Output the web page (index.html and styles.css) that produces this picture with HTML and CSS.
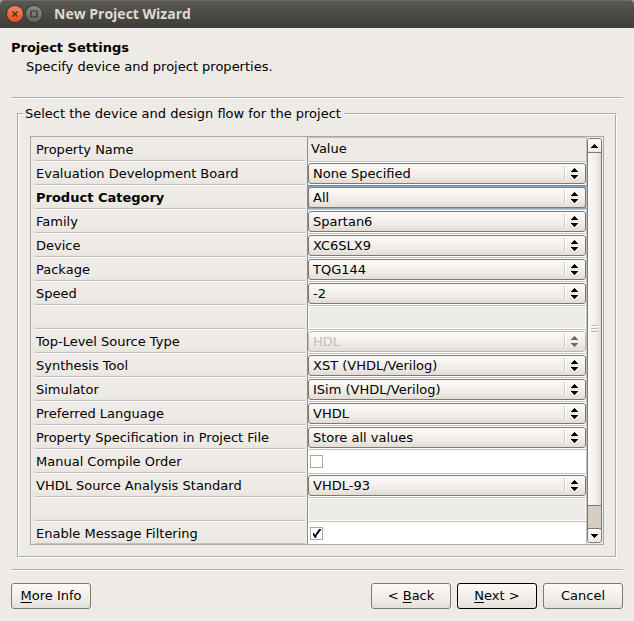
FILE: index.html
```html
<!DOCTYPE html>
<html lang="en">
<head>
<meta charset="utf-8">
<title>New Project Wizard</title>
<link rel="stylesheet" href="styles.css">
</head>
<body>
<svg class="defs" aria-hidden="true">
  <symbol id="arrows" viewBox="0 0 7 11" shape-rendering="crispEdges">
    <path d="M3 0h1v1h1v1h1v1h1v1H0V3h1V2h1V1h1zM0 7h7v1H6v1H5v1H4v1H3v-1H2V9H1V8H0z"/>
  </symbol>
</svg>
<header class="titlebar">
  <button class="win close" aria-label="Close"><svg width="16" height="16" viewBox="0 0 16 16"><path d="M5.5 5.5l5 5m0-5l-5 5"/></svg></button>
  <button class="win max" aria-label="Maximize"><svg width="16" height="16" viewBox="0 0 16 16"><path d="M5 5h6v6H5z"/></svg></button>
  <span class="title">New Project Wizard</span>
</header>
<main>
  <div class="intro">
    <h1>Project Settings</h1>
    <p>Specify device and project properties.</p>
  </div>
  <hr>
  <fieldset>
    <legend>Select the device and design flow for the project</legend>
    <div class="frame">
      <table>
        <thead>
          <tr><th class="name">Property Name</th><th class="value">Value</th></tr>
        </thead>
        <tbody>
          <tr><td class="name"><label for="board">Evaluation Development Board</label></td><td class="value"><div class="combo"><select id="board"><option>None Specified</option></select><svg><use href="#arrows"/></svg></div></td></tr>
          <tr class="current"><td class="name"><label for="category">Product Category</label></td><td class="value"><div class="combo"><select id="category"><option>All</option></select><svg><use href="#arrows"/></svg></div></td></tr>
          <tr><td class="name"><label for="family">Family</label></td><td class="value"><div class="combo"><select id="family"><option>Spartan6</option></select><svg><use href="#arrows"/></svg></div></td></tr>
          <tr><td class="name"><label for="device">Device</label></td><td class="value"><div class="combo"><select id="device"><option>XC6SLX9</option></select><svg><use href="#arrows"/></svg></div></td></tr>
          <tr><td class="name"><label for="package">Package</label></td><td class="value"><div class="combo"><select id="package"><option>TQG144</option></select><svg><use href="#arrows"/></svg></div></td></tr>
          <tr><td class="name"><label for="speed">Speed</label></td><td class="value"><div class="combo"><select id="speed"><option>-2</option></select><svg><use href="#arrows"/></svg></div></td></tr>
          <tr class="blank"><td class="name"></td><td class="value"></td></tr>
          <tr><td class="name"><label for="source">Top-Level Source Type</label></td><td class="value"><div class="combo off"><select id="source" disabled><option>HDL</option></select><svg><use href="#arrows"/></svg></div></td></tr>
          <tr><td class="name"><label for="synthesis">Synthesis Tool</label></td><td class="value"><div class="combo"><select id="synthesis"><option>XST (VHDL/Verilog)</option></select><svg><use href="#arrows"/></svg></div></td></tr>
          <tr><td class="name"><label for="simulator">Simulator</label></td><td class="value"><div class="combo"><select id="simulator"><option>ISim (VHDL/Verilog)</option></select><svg><use href="#arrows"/></svg></div></td></tr>
          <tr><td class="name"><label for="language">Preferred Language</label></td><td class="value"><div class="combo"><select id="language"><option>VHDL</option></select><svg><use href="#arrows"/></svg></div></td></tr>
          <tr><td class="name"><label for="spec">Property Specification in Project File</label></td><td class="value"><div class="combo"><select id="spec"><option>Store all values</option></select><svg><use href="#arrows"/></svg></div></td></tr>
          <tr><td class="name"><label for="manual">Manual Compile Order</label></td><td class="value"><div class="tick"><input type="checkbox" id="manual"><svg viewBox="0 0 13 13"><path d="M3 6v3l2 2h1l1-3 3-5V2H9L5 8 4 6z"/></svg></div></td></tr>
          <tr><td class="name"><label for="standard">VHDL Source Analysis Standard</label></td><td class="value"><div class="combo"><select id="standard"><option>VHDL-93</option></select><svg><use href="#arrows"/></svg></div></td></tr>
          <tr class="blank"><td class="name"></td><td class="value"></td></tr>
          <tr><td class="name"><label for="filter">Enable Message Filtering</label></td><td class="value"><div class="tick"><input type="checkbox" id="filter" checked><svg viewBox="0 0 13 13"><path d="M3 6v2l2 3h1l1-3 4-5V2H9L5 8 4 6z"/></svg></div></td></tr>
        </tbody>
      </table>
      <div class="scrollbar">
        <button class="step" aria-label="Scroll up"><svg width="7" height="4" viewBox="0 0 7 4" shape-rendering="crispEdges"><path d="M3 0h1v1h1v1h1v1h1v1H0V3h1V2h1V1h1z"/></svg></button>
        <div class="thumb"><i></i><i></i><i></i></div>
        <div class="trough"></div>
        <button class="step" aria-label="Scroll down"><svg width="7" height="4" viewBox="0 0 7 4" shape-rendering="crispEdges"><path d="M0 0h7v1H6v1H5v1H4v1H3V3H2V2H1V1H0z"/></svg></button>
      </div>
    </div>
  </fieldset>
  <hr>
  <footer>
    <button class="push"><u>M</u>ore Info</button>
    <span class="spacer"></span>
    <button class="push">&lt; <u>B</u>ack</button>
    <button class="push default"><u>N</u>ext &gt;</button>
    <button class="push">Cancel</button>
  </footer>
</main>
</body>
</html>
```
FILE: styles.css
```css
* { box-sizing: border-box; }

html { background: linear-gradient(#a5a39f 0 8px, #eeebe7 8px); }
body {
  margin: 0;
  color: #000;
  font: 13px/16px "DejaVu Sans", sans-serif;
}
main { background: #eeebe7; }

button, select, input { font: inherit; color: inherit; margin: 0; }
svg { display: block; }
.defs { display: none; }

.titlebar {
  display: flex;
  align-items: center;
  height: 28px;
  padding: 0 7px;
  gap: 3px;
  border-radius: 5px 5px 0 0;
  background: linear-gradient(#5b5952, #3d3c38);
  box-shadow: inset 0 1px #6b6962;
}

.win {
  width: 16px;
  height: 16px;
  padding: 0;
  border: 0;
  border-radius: 50%;
  box-shadow: 0 0 0 1px #33322e;
}
.win svg { fill: none; stroke: #4a2a1c; stroke-width: 1.2; }
.close { background: linear-gradient(#f58562, #e2501f); }
.max { background: linear-gradient(#8d8b83, #65635c); }
.max svg { stroke: #34332f; }

.title {
  margin-left: 9px;
  color: #dfdbd2;
  font: bold 14px/20px "Open Sans", sans-serif;
}

.intro { padding: 10px 11px 0; line-height: 19px; }
h1 { margin: 0; font-size: 13px; line-height: 19px; }
p { margin: 0 0 0 15px; }

hr {
  margin: 21px 11px 7px;
  border: 0;
  border-top: 1px solid #b3afab;
  border-bottom: 1px solid #fff;
}

fieldset {
  min-width: 0;
  margin: 0 17px;
  padding: 14px 11px 11px;
  border: 2px groove #fff;
}
fieldset + hr { margin: 11px 11px 12px; }
legend { margin-left: -7px; padding: 0 3px 0 2px; }

.frame {
  display: flex;
  border: 1px solid #aaa6a1;
  padding-right: 1px;
}

table {
  flex: 1;
  table-layout: fixed;
  border-collapse: separate;
  border-spacing: 0;
}
th, td { padding: 0; height: 24px; font-weight: normal; text-align: left; }
.name {
  width: 276px;
  padding: 2px 0 0 5px;
  background:
    linear-gradient(#c4c0bb, #c4c0bb) 4px bottom / calc(100% - 6px) 1px no-repeat,
    linear-gradient(#fff, #fff) 4px top / calc(100% - 6px) 1px no-repeat,
    linear-gradient(#eeebe7 18px, #e6e3df) 1px top / calc(100% - 3px) 100% no-repeat,
    #eeebe7;
}
.value {
  border: 1px solid #c4c0bb;
  border-width: 1px 1px 0;
  border-left-color: #918d88;
  background: #fff;
}
.blank .value { box-shadow: inset 0 0 0 1px #fff; background: #eeebe7; }
thead .value { padding: 0 0 2px 3px; background: #eeebe7; }
thead .name {
  background:
    linear-gradient(#c4c0bb, #c4c0bb) 4px bottom / calc(100% - 6px) 1px no-repeat,
    linear-gradient(#eeebe7 18px, #e6e3df) 1px top / calc(100% - 3px) 100% no-repeat;
}
.current .name { font-weight: bold; }
tbody tr:last-child td { height: 23px; }

.combo {
  display: grid;
  grid-template: 23px / 1fr 20px;
  align-items: center;
}
.combo select {
  grid-area: 1 / 1 / 2 / 3;
  appearance: none;
  width: 100%;
  height: 21px;
  padding: 0 24px 0 4px;
  border: 1px solid #7f7974;
  border-radius: 3px;
  background:
    linear-gradient(#d0ccc7, #d0ccc7) right 20px center / 1px 15px no-repeat,
    linear-gradient(#fff, #fff) right 19px center / 1px 15px no-repeat,
    linear-gradient(#fcfaf8, #f0ede9 60%, #e2dcd5);
}
.combo svg {
  grid-area: 1 / 2 / 2 / 3;
  width: 7px;
  height: 11px;
  margin-left: 5px;
  pointer-events: none;
}
.off select { border-color: #bbb7b3; color: #c2bebb; opacity: 1; }
.off svg { fill: #6c6966; }
.current .value { border-top-color: #6487ad; background: #8aa9c9; }

.tick { display: grid; align-items: center; padding-left: 2px; }
.tick input {
  grid-area: 1 / 1;
  appearance: none;
  width: 13px;
  height: 13px;
  border: 1px solid #aaa6a1;
  background: #fff;
}
.tick svg {
  grid-area: 1 / 1;
  width: 13px;
  height: 13px;
  visibility: hidden;
  pointer-events: none;
}
.tick input:checked + svg { visibility: visible; }

.scrollbar {
  display: flex;
  flex-direction: column;
  width: 15px;
  margin: 1px 0;
  border: 1px solid #7f7974;
  border-radius: 3px;
  background: #d6cdc5;
}
.step {
  display: grid;
  place-items: center;
  height: 13px;
  padding: 0;
  border: 0;
  border-radius: 2px;
  background: linear-gradient(#fcfaf8, #eeebe7);
}
.thumb {
  flex: 1;
  display: flex;
  flex-direction: column;
  justify-content: center;
  align-items: center;
  gap: 1px;
  border: 1px solid #7f7974;
  border-width: 1px 0;
  background: linear-gradient(90deg, #fcfaf8, #eeebe7 70%, #ded8d1);
}
.thumb i { width: 7px; height: 2px; border-top: 1px solid #bbb7b3; background: #fff; }
.trough { height: 23px; border-bottom: 1px solid #7f7974; }

footer { display: flex; gap: 6px; padding: 0 11px 12px; }
.spacer { flex: 1; }
.push {
  width: 80px;
  height: 26px;
  padding: 0;
  border: 1px solid #7f7974;
  border-radius: 3px;
  background: linear-gradient(#fcfaf8, #f0ede9 60%, #e4dfd9);
}
.default { border-color: #000; }
u { text-underline-offset: 2px; text-decoration-skip-ink: none; }
```
